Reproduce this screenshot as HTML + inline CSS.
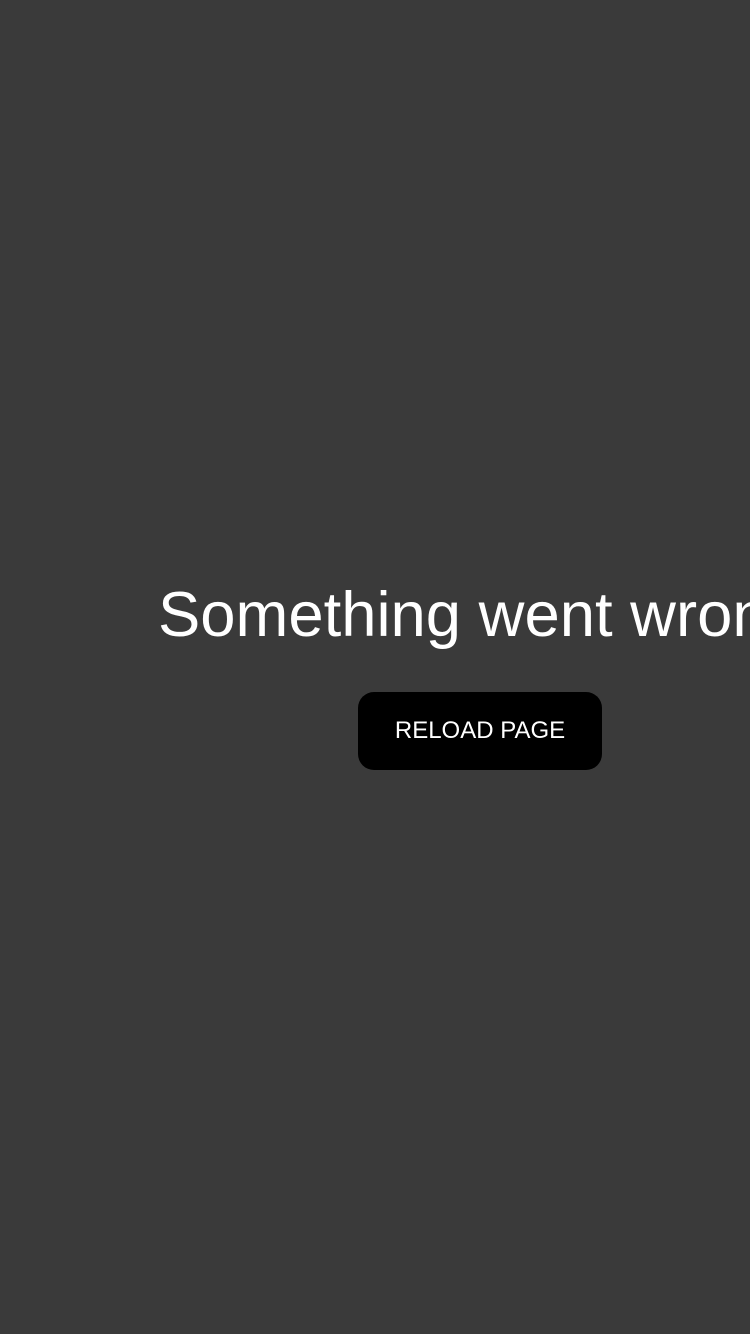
<!DOCTYPE html>
<html><head><style>
html,body{margin:0;padding:0;width:750px;height:1334px;background:#3a3a3a;overflow:hidden;font-family:"Liberation Sans",sans-serif;}
.wrap{position:absolute;left:0;top:0;width:750px;height:1334px;overflow:hidden;}
.t{position:absolute;left:158px;top:578px;font-size:63.4px;line-height:74px;color:#fff;white-space:nowrap;}
.b{position:absolute;left:358px;top:692px;width:244px;height:78px;background:#000;border-radius:16px;color:#fff;font-size:24px;line-height:78px;text-align:center;}
</style></head><body>
<div class="wrap">
<div class="t">Something went wrong</div>
<div class="b">RELOAD PAGE</div>
</div>
</body></html>
